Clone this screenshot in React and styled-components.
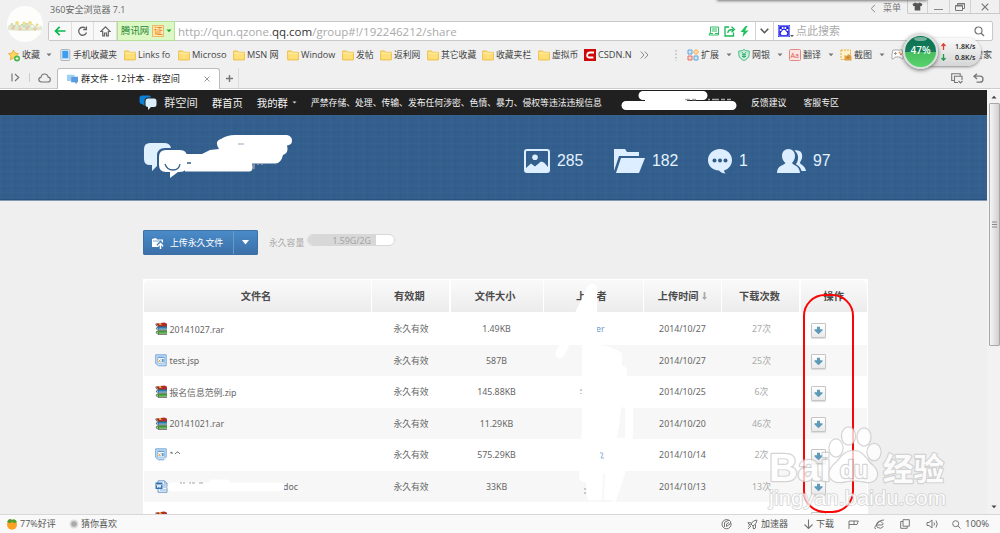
import React from 'react'
import styled, { createGlobalStyle } from 'styled-components'

const GlobalStyle = createGlobalStyle`
*{
    box-sizing: border-box;
}
body{
    margin: 0;
    overflow: hidden;
    font-family: "Open Sans", "Noto Sans CJK SC", sans-serif;
    font-size: 9px;
    color: #444;
}
svg{
    display: block;
    flex: none;
}
`

const bookmarks = [
    { label: '手机收藏夹', width: 64, icon: 'phone' },
    { label: 'Links fo', width: 54, size: 9 },
    { label: 'Microso', width: 55, size: 9.3 },
    { label: 'MSN 网', width: 54, size: 9.2 },
    { label: 'Window', width: 55, size: 9.1 },
    { label: '发帖', width: 38 },
    { label: '返利网', width: 47 },
    { label: '其它收藏', width: 55 },
    { label: '收藏夹栏', width: 56 },
    { label: '虚拟币', width: 46 },
    { label: 'CSDN.N', width: 56, icon: 'csdn', size: 9.2 },
]

const tools = [
    { label: '扩展', icon: 'grid', width: 51 },
    { label: '网银', icon: 'shield', width: 51 },
    { label: '翻译', icon: 'translate', width: 51 },
    { label: '截图', icon: 'crop', width: 51 },
]

const files = [
    { name: '20141027.rar', icon: 'rar', size: '1.49KB', user: 'er', userLeft: 53, date: '2014/10/27', count: '27次' },
    { name: 'test.jsp', icon: 'jsp', size: '587B', date: '2014/10/27', count: '25次' },
    { name: '报名信息范例.zip', icon: 'rar', size: '145.88KB', date: '2014/10/25', count: '6次' },
    { name: '20141021.rar', icon: 'rar', size: '11.29KB', date: '2014/10/20', count: '46次' },
    { name: '', icon: 'jsp', size: '575.29KB', date: '2014/10/14', count: '2次' },
    { name: 'doc', nameLeft: 115, icon: 'doc', size: '33KB', date: '2014/10/13', count: '13次' },
    { name: '', icon: 'rar', size: '', date: '', count: '' },
]

function Icon({ name }) {
    switch (name) {
        case 'phone':
            return <svg width="11" height="12" viewBox="0 0 11 12"><rect x=".8" y=".5" width="9" height="11" rx="1" fill="#e8edf2" stroke="#a9b5c2" /><path d="M2.300 1.800h6v7.500h-6z" fill="#3d9df3" /></svg>
        case 'csdn':
            return <svg width="12" height="12" viewBox="0 0 12 12"><path d="M0 0h12v12H0z" fill="#cf0808" /><path d="M10 3.500H6Q3.600 3.500 3.200 5.800q-.4 2.700 1.800 2.700h4.400" fill="none" stroke="#fff" strokeWidth="1.800" /></svg>
        case 'grid':
            return <svg width="12" height="12" viewBox="0 0 12 12"><path d="M1 1h4v4H1z" stroke="#65a7da" fill="#cfe6f8" /><path d="M9 .500l2.500 2.500L9 5.500 6.500 3z" stroke="#f2a045" fill="#ffe1a8" /><path d="M1 7h4v4H1z" stroke="#e07367" fill="#f8d5d1" /><path d="M7 7h4v4H7z" stroke="#65a7da" fill="#cfe6f8" /></svg>
        case 'shield':
            return <svg width="12" height="12" viewBox="0 0 12 12" fill="none"><path d="M6 .6C4 2 2 2 .8 2v3.600C.8 9 4 10.500 6 11.500c2-1 5.200-2.500 5.200-5.900V2C10 2 8 2 6 .6z" fill="#c9f0db" stroke="#43b983" /><path d="M3.800 3l2.200 2.500L8.200 3M6 5.500V9M4 5.800h4M4 7.500h4" stroke="#35a774" /></svg>
        case 'translate':
            return <svg width="12" height="12" viewBox="0 0 12 12"><rect x=".5" y=".5" width="11" height="11" rx="1" fill="#fbe4e2" stroke="#df8b85" /><text x="1.600" y="8.800" fontSize="7" fill="#d7564d">Aa</text></svg>
        case 'crop':
            return <svg width="12" height="12" viewBox="0 0 12 12"><rect x="1" y="1" width="9.500" height="9.500" fill="#fff2ca" stroke="#eba936" strokeDasharray="2 1" /><path d="M4.500 6l2 1 2-2 3 2v4.500h-7z" fill="#e0a04a" /><circle cx="8" cy="8.500" r="1.300" fill="#c98432" /></svg>
        case 'game':
            return <svg width="13" height="12" viewBox="0 0 13 12" fill="none"><path d="M2 1h9q1.500 4 1 9-1 1-3-2H4Q2 11 1 10 .5 5 2 1z" stroke="#aaa" fill="#fff" /><path d="M3 4.500h3M4.500 3v3" stroke="#999" /><circle cx="8.500" cy="3.500" r="1" fill="#eda33b" /><circle cx="10" cy="5.200" r="1" fill="#e35d52" /></svg>
        case 'rar':
            return <svg width="13" height="13" viewBox="0 0 13 13"><path d="M1 1.500L9.500.500l2.500 1.300v2.500H3z" fill="#b02c2c" /><path d="M2 5h10v2.800H3z" fill="#2c78b8" /><path d="M2 8.800h10v3.200H3z" fill="#3f9c2c" /><path d="M3 4.500h9M3 8.200h9M3 12.300h9" stroke="#222" strokeWidth=".7" /><path d="M4 7h8M4 11.200h8" stroke="#bfe6c4" strokeWidth=".7" /><path d="M3.500 1.300l2-.4 1.300 1.600-2 .4z" fill="#f0c438" /><path d="M1 1.600Q.2 3.500 2.800 4.500M2 5.300Q.2 6.800 2.800 8.200M2 9Q.2 10.800 2.800 12.300" stroke="#444" strokeWidth=".9" fill="none" /></svg>
        case 'doc':
            return <svg width="13" height="13" viewBox="0 0 13 13"><path d="M3 .800h6.500L12 3.300v9H3z" fill="#eef6ff" stroke="#6e9bc8" /><path d="M9.500.800v2.500H12M8 5h3M8 7h3M5 10h6" stroke="#8aaed2" fill="none" /><path d="M.5 2.500h7v6.500h-7z" fill="#3472b0" /><path d="M1.800 4l1 3.500L4 4.500l1 3L6.200 4" stroke="#fff" fill="none" /></svg>
        case 'jsp':
            return <svg width="13" height="13" viewBox="0 0 13 13"><path d="M.7.800h10.500v11H3.500L.7 9.500z" fill="#c7dff5" stroke="#79a7d4" /><path d="M2.500 3h7v6h-7z" fill="#fff" stroke="#8bb8e0" strokeWidth=".8" /><path d="M3 3.500h6" stroke="#6aa4d8" strokeWidth="1.300" /><path d="M3.500 5.500l2 2.500m0-2.500l-2 2.500" stroke="#e59b40" /><path d="M6.700 5h2v3h-2z" fill="#559dd9" /></svg>
        default:
            return <svg width="12" height="11" viewBox="0 0 12 11"><path d="M.7 1h3.800l1.200 1.300h5.600v7.600H.7z" fill="#ffdf78" stroke="#edbd45" /><path d="M1 3.200h10" stroke="#fff0ae" /></svg>
    }
}

function Caret({ color = '#777' }) {
    return <svg width="6" height="4" viewBox="0 0 6 4"><path d="M.5.500h5L3 3.300z" fill={color} /></svg>
}

function TopBar() {
    return (
        <TitleArea>
            <Avatar>
                <svg width="36" height="36" viewBox="0 0 36 36">
                    <path d="M1 20q4-3 7-1t7-1 7 1 13 1v4Q18 26 1 24z" fill="#dfe9cb" />
                    <path d="M3 20l2-3 2 4 3-4 2 4 3-3 2 3 3-4 2 4 3-3 3 3 3-2" stroke="#bccda5" strokeWidth=".8" fill="none" />
                    <g fill="#efc0ae"><circle cx="6" cy="22" r="1.700" /><circle cx="13" cy="23" r="1.500" /><circle cx="20" cy="22" r="1.700" /><circle cx="28" cy="23" r="1.600" /></g>
                    <g fill="#efdf80"><circle cx="10" cy="17" r="1.900" /><circle cx="17" cy="17" r="1.600" /><circle cx="23" cy="17" r="1.900" /><circle cx="30" cy="19" r="1.400" /></g>
                </svg>
            </Avatar>
            <TitleRight>
                <TitleRow>
                    <AppTitle>360安全浏览器 7.1</AppTitle>
                    <MenuLabel>
                        <svg width="6" height="9" viewBox="0 0 6 9"><path d="M5 .800L1.200 4.500 5 8.200" fill="none" stroke="#888" /></svg>
                        <span>菜单</span>
                    </MenuLabel>
                    <WindowButtons>
                        <WinButton $width={20}><svg width="11" height="9" viewBox="0 0 11 9"><path d="M3.500.500Q5.500 2.200 7.500.500L10.500 2 9.500 4.300l-1.200-.4V8.500H2.700V3.900l-1.200.4L.5 2z" fill="#555" /></svg></WinButton>
                        <WinButton $width={22}><svg width="9" height="8" viewBox="0 0 9 8"><path d="M0 6.500h9" stroke="#888" /></svg></WinButton>
                        <WinButton $width={21}><svg width="10" height="8" viewBox="0 0 10 8"><path d="M2.500 2V.500h7v5H8M.5 2.500h7v5h-7z" stroke="#777" fill="none" /><path d="M2.500 1h7M.5 3h7" stroke="#777" /></svg></WinButton>
                        <WinButton $width={29}><svg width="8" height="8" viewBox="0 0 8 8"><path d="M.7.700l6.600 6.600M7.300.700L.7 7.300" stroke="#777" strokeWidth="1.200" /></svg></WinButton>
                    </WindowButtons>
                </TitleRow>
                <AddressBar>
                    <NavButton $width={23}><svg width="12" height="10" viewBox="0 0 12 10"><path d="M11.500 5H1.500M5.700.800L1.500 5l4.200 4.200" stroke="#0bb850" strokeWidth="1.700" fill="none" /></svg></NavButton>
                    <NavButton $width={22}><svg width="11" height="11" viewBox="0 0 11 11"><path d="M8.500 2.400A4 4 0 1 0 9.500 6.500M9.400.500v3.200H6.200" stroke="#666" strokeWidth="1.300" fill="none" /></svg></NavButton>
                    <NavButton $width={23}><svg width="11" height="11" viewBox="0 0 11 11"><path d="M.8 5.500L5.500.9l4.700 4.600H8.300v4.300H6.500V7h-2v2.800H2.700V5.500z" stroke="#666" strokeWidth="1.200" fill="none" /></svg></NavButton>
                    <SiteBadge>
                        <span>腾讯网</span>
                        <Cert>证</Cert>
                        <Caret color="#24a32b" />
                    </SiteBadge>
                    <Url>http://qun.qzone.<b>qq.com</b>/group#!/192246212/share</Url>
                    <AddressIcons>
                        <svg width="12" height="11" viewBox="0 0 12 11"><path d="M2.500 1h8v8H1L2.500 6zM4 3h5M4 5h5M2 7.500h3M7 7.500h3" stroke="#2abf61" fill="none" /></svg>
                        <svg width="12" height="11" viewBox="0 0 12 11"><path d="M5 1H1v9h8.500V6.500M3.800 7Q4 3.500 9 3.500M7.500.700l3 2.800-3 2.700" stroke="#17b955" strokeWidth="1.300" fill="none" /></svg>
                        <svg width="9" height="11" viewBox="0 0 9 11"><path d="M5.500 0L.5 6h3L2.500 11l6-6.500H5L7.500 0z" fill="#1cc45b" /></svg>
                    </AddressIcons>
                    <DropButton><svg width="9" height="6" viewBox="0 0 9 6"><path d="M.7.700l3.800 4 3.800-4" stroke="#555" strokeWidth="1.500" fill="none" /></svg></DropButton>
                    <SearchBox>
                        <svg width="12" height="12" viewBox="0 0 12 12"><path d="M0 0h12v12H0z" fill="#1818e8" /><path d="M.8.800h10.400v10.400H.8z" fill="none" stroke="#fff" strokeWidth=".6" /><g fill="#fff"><circle cx="2.700" cy="5" r="1" /><circle cx="4.700" cy="3" r="1.100" /><circle cx="7.300" cy="3" r="1.100" /><circle cx="9.300" cy="5" r="1" /><path d="M6 4.700c1.500 0 1.500 1.300 2.700 2.400 1.300 1.400.5 3-1 2.900H4.300c-1.400.1-2.300-1.500-1-2.900C4.500 6 4.500 4.700 6 4.700z" /></g></svg>
                        <SearchCaret width="4" height="4" viewBox="0 0 4 4"><path d="M0 1h4L2 3z" fill="#555" /></SearchCaret>
                        <Placeholder>点此搜索</Placeholder>
                        <svg width="11" height="11" viewBox="0 0 11 11"><circle cx="4.500" cy="4.500" r="3.500" stroke="#777" strokeWidth="1.200" fill="none" /><path d="M7 7l3 3" stroke="#777" strokeWidth="1.400" /></svg>
                    </SearchBox>
                </AddressBar>
            </TitleRight>
        </TitleArea>
    )
}

function Bookmarks() {
    return (
        <BookmarkBar>
            <Favorites>
                <svg width="13" height="13" viewBox="0 0 13 13"><path d="M5.500 1l1.500 3.200 3.600.4L8 7.200l.6 3.600-3.100-1.700-3.200 1.700.6-3.600L.5 4.600 4 4.200z" fill="#ffd75c" stroke="#e9a52e" strokeWidth=".8" /><circle cx="9" cy="9.500" r="3" fill="#48b84a" /><path d="M7.500 9.500h3M9 8v3" stroke="#fff" /></svg>
                <span>收藏</span>
                <Caret />
            </Favorites>
            {bookmarks.map((item) => (
                <Bookmark key={item.label} $width={item.width} $size={item.size}>
                    <Icon name={item.icon} />
                    <span>{item.label}</span>
                </Bookmark>
            ))}
            <svg width="9" height="8" viewBox="0 0 9 8"><path d="M.7.500l3.300 3.500L.7 7.500M4.700.500L8 4 4.700 7.500" stroke="#888" fill="none" /></svg>
            <ToolList>
                <svg width="2" height="11" viewBox="0 0 2 11"><path d="M1 0v11" stroke="#bbb" strokeWidth="1.500" strokeDasharray="1.500 2" /></svg>
                {tools.map((tool) => (
                    <Tool key={tool.label} $width={tool.width}>
                        <Icon name={tool.icon} />
                        <span>{tool.label}</span>
                        <Caret />
                    </Tool>
                ))}
                <Icon name="game" />
                <LastTool>管家</LastTool>
            </ToolList>
        </BookmarkBar>
    )
}

function Bubbles() {
    return <svg width="18" height="16" viewBox="0 0 18 16"><path d="M3 .500h7q2 0 2 2H9Q5.500 2.500 5.500 6v5L3 9Q.5 9 .5 6.500V3Q.5.500 3 .500z" fill="#0c80d4" /><path d="M8.500 3.500h6.500q2.500 0 2.500 2.500v3.500q0 2.500-2.500 2.500h-3l-3 3v-3Q6.500 12 6.500 9.500V6Q6.500 3.500 8.500 3.500z" fill="#d9edfa" /></svg>
}

function TabStrip() {
    return (
        <Tabs>
            <TabTools>
                <svg width="9" height="9" viewBox="0 0 9 9"><path d="M1 .500v8M4 1l3.700 3.500L4 8" stroke="#777" strokeWidth="1.200" fill="none" /></svg>
                <Divider />
                <svg width="13" height="10" viewBox="0 0 13 10"><path d="M3.500 9Q.8 9 .8 6.600.8 4.500 3 4.300 3.400 1 6.500 1t3.600 3.200q2.200.2 2.200 2.300Q12.300 9 10 9z" stroke="#777" strokeWidth="1.200" fill="none" /></svg>
            </TabTools>
            <Tab>
                <svg width="13" height="11" viewBox="0 0 18 16"><path d="M1 1h11v3H7v6H1z" fill="#9fd0f1" /><path d="M7 4h10v8h-2v3l-3-3H7z" fill="#5b9cdf" /></svg>
                <TabTitle>群文件 - 12计本 - 群空间</TabTitle>
                <svg width="6" height="6" viewBox="0 0 6 6"><path d="M.5.500l5 5m0-5l-5 5" stroke="#999" /></svg>
            </Tab>
            <NewTab><svg width="9" height="9" viewBox="0 0 9 9"><path d="M1 4.500h7M4.500 1v7" stroke="#777" strokeWidth="1.400" /></svg></NewTab>
            <TabRight>
                <svg width="12" height="11" viewBox="0 0 12 11"><path d="M3 7.500H.7V.700h8.500V3M11 7V3.300H3.500v6.200H7M7.500 8l2 2 2-2" stroke="#777" strokeWidth="1.100" fill="none" /></svg>
                <svg width="11" height="11" viewBox="0 0 11 11"><path d="M4 .700L1 3.200 4 6M1 3.200h6q3 0 3 3t-3 3H3.500" stroke="#777" strokeWidth="1.300" fill="none" /></svg>
            </TabRight>
        </Tabs>
    )
}

function SpeedBall() {
    return (
        <SpeedWidget>
            <Ball>47%</Ball>
            <Speeds>
                <Speed>
                    <svg width="5" height="7" viewBox="0 0 5 7"><path d="M2.500 7V2M.5 3l2-2.200L4.500 3" stroke="#df3f32" strokeWidth="1.300" fill="none" /></svg>
                    <span>1.8K/s</span>
                </Speed>
                <Speed>
                    <svg width="5" height="7" viewBox="0 0 5 7"><path d="M2.500 0v5M.5 4l2 2.200L4.500 4" stroke="#239847" strokeWidth="1.300" fill="none" /></svg>
                    <span>0.8K/s</span>
                </Speed>
            </Speeds>
        </SpeedWidget>
    )
}

function SiteHeader() {
    return (
        <>
            <SiteNav>
                <Bubbles />
                <NavLink $left={7} $size={11.300} $color="#e4e4e4">群空间</NavLink>
                <NavLink $left={14} $size={10.300}>群首页</NavLink>
                <NavLink $left={14} $size={10.400}>我的群</NavLink>
                <NavCaret><svg width="5" height="3" viewBox="0 0 5 3"><path d="M.5.500h4l-2 2z" fill="#ddd" /></svg></NavCaret>
                <NavLink $left={14} $size={8.820}>严禁存储、处理、传输、发布任何涉密、色情、暴力、侵权等违法违规信息</NavLink>
                <NavRight>
                    <NavLink $size={8.900}>反馈建议</NavLink>
                    <NavLink $size={8.900}>客服专区</NavLink>
                </NavRight>
                <Scribble $left={621} $top={0} width="116" height="21" viewBox="0 0 116 21">
                    <path d="M22 5.500h60M5 15.500h106" stroke="#fff" strokeWidth="9" strokeLinecap="round" />
                    <path d="M24 10.500h42" stroke="#fff" strokeWidth="3" />
                    <path d="M64 9.500h5m2 0h4m12 0h2m2 0h7m2 0h4m2 0h4" stroke="#aaa" strokeWidth="1.500" />
                </Scribble>
            </SiteNav>
            <Banner>
                <BannerLogo>
                    <svg width="152" height="46" viewBox="0 0 152 46">
                        <path d="M8 8h14q6 0 7 5h-6q-8 0-8 8v10l-5 5v-6H8q-6 0-6-6V14q0-6 6-6z" fill="#dff0ff" />
                        <path d="M24 15h14q7 0 7 7v8q0 7-7 7h-2l-8 6v-6h-4q-7 0-7-7v-8q0-7 7-7z" fill="#fff" />
                        <path d="M43 19h17l8-4 9-1q-5-8 2-10 6-4 14-4h52q5 1 5 5.500t-5 5q2 8-4 9.500-2 8-7 8.500h-24q2 8-3 8H43z" fill="#fff" />
                        <path d="M23 29q2 6 8 6t7-6M45 28h4" stroke="#355f89" strokeWidth="1.300" fill="none" />
                        <path d="M96 9h6" stroke="#849eba" strokeWidth=".9" />
                        <path d="M112 29v5M115 29h2M119 29h2" stroke="#c9b4c6" strokeWidth="1" />
                    </svg>
                </BannerLogo>
                <Stats>
                    <Stat $width={90}>
                        <svg width="26" height="24" viewBox="0 0 26 24"><rect x="1" y="1" width="24" height="22" rx="2" fill="none" stroke="#dceeff" strokeWidth="2" /><circle cx="11" cy="8.200" r="2.800" fill="#dceeff" /><path d="M2 19l5-4.500 4 3 6-5 3 1 4 4.500v5H2z" fill="#dceeff" /></svg>
                        <span>285</span>
                    </Stat>
                    <Stat $width={94}>
                        <svg width="31" height="24" viewBox="0 0 31 24"><path d="M0 22V0h11l2 3h12v4H5z" fill="#dceeff" /><path d="M7 9h24l-6 15H2z" fill="#dceeff" /></svg>
                        <span>182</span>
                    </Stat>
                    <Stat $width={69}>
                        <svg width="24" height="25" viewBox="0 0 24 25"><path d="M12 0c7 0 12 5 12 11 0 5-3 9-8 10.500 0 1 .5 2 1.500 3-2.500 0-5-1-6.500-3C4 21 0 17 0 11 0 5 5 0 12 0z" fill="#dceeff" /><g fill="#315c88"><circle cx="6.500" cy="11.500" r="2" /><circle cx="12" cy="11.500" r="2" /><circle cx="17.500" cy="11.500" r="2" /></g></svg>
                        <span>1</span>
                    </Stat>
                    <Stat $width={60}>
                        <svg width="29" height="24" viewBox="0 0 29 24"><path d="M17.500 1.500c6-1 8.500 3 7.500 7.500-.6 2.500-2 3.500-2 5 0 1.500 5.500 2.500 6 8h-4.500c-1-5-5.500-6-5.500-7 3-4 3-10-1.500-13.500z" fill="#dceeff" /><path d="M11.500 0c4 0 6.500 3 6.500 7 0 3-1.500 5.500-3 7 1 2.500 7.500 2 8 10H0c0-8 7-7.500 8.500-10-2-1.500-3.500-4-3.500-7 0-4 2.500-7 6.500-7z" fill="#dceeff" /></svg>
                        <span>97</span>
                    </Stat>
                </Stats>
            </Banner>
        </>
    )
}

function FileRow({ file, even }) {
    return (
        <Row $even={even}>
            <NameCell>
                <Icon name={file.icon} />
                <FileName $left={file.nameLeft}>{file.name}</FileName>
            </NameCell>
            <Cell>{file.date && '永久有效'}</Cell>
            <Cell>{file.size}</Cell>
            <UserCell $left={file.userLeft}>{file.user}</UserCell>
            <Cell>{file.date}</Cell>
            <Cell $light>{file.count}</Cell>
            <ActionCell>
                <DownloadButton>
                    <svg width="9" height="9" viewBox="0 0 9 9"><path d="M3 .700h3v2.600h2.500v1.200L4.500 8.300.5 4.500V3.300H3z" fill="#5f9abb" /></svg>
                </DownloadButton>
            </ActionCell>
        </Row>
    )
}

function FileTable() {
    return (
        <Table>
            <HeadRow>
                <Head>文件名</Head>
                <Head $shift={-3}>有效期</Head>
                <Head $shift={-3}>文件大小</Head>
                <Head $shift={-4}>上传者</Head>
                <Head>上传时间<svg width="7" height="9" viewBox="0 0 7 9"><path d="M2.600 0h1.800v5H6L3.500 8 1 5h1.600z" fill="#aaa" /></svg></Head>
                <Head $shift={-3}>下载次数</Head>
                <Head>操作</Head>
            </HeadRow>
            {files.map((file, i) => <FileRow key={i} file={file} even={i % 2 === 1} />)}
            <Scribble $left={409} $top={3} width="84" height="228" viewBox="0 0 84 228">
                <path d="M36 5q4-7 9 0v58l10 1 10 4q5 2 5 5v11q4 0 5 4v37h6v31l-8 36-9 27q-4 2-5-1H40q-4 2-5-4l-1-14q-6 1-7-5l3-48V52z" fill="#fff" />
                <path d="M8 72L40 6" stroke="#fff" strokeWidth="9" strokeLinecap="round" />
                <path d="M69 125.500h4V156h-8q3-14 4-30.500M51 191h2l-1 27h-2z" fill="#f7f7f7" />
            </Scribble>
            <Scribble $left={24} $top={199} width="118" height="16" viewBox="0 0 118 16">
                <path d="M5 9h108M46 6h13" stroke="#fff" strokeWidth="9" strokeLinecap="round" />
                <path d="M13 5h2m1 0h2m4 0h2m1 0h3m4 0h4" stroke="#999" strokeWidth=".9" />
            </Scribble>
            <Scribble $left={11} $top={170} width="32" height="18" viewBox="0 0 32 18">
                <path d="M16 4l2-1v2M21 5l2-2h1l2 2" stroke="#777" fill="none" />
                <path d="M0 10l6 6v2H0zM8 13l5-5v9H8z" fill="#fff" />
            </Scribble>
            <Scribble $left={433} $top={106} width="30" height="110" viewBox="0 0 30 110">
                <path d="M5 4v2m0 2v1m4 94v2m0 2v2" stroke="#999" />
                <path d="M24 68q3-1 3 1l-2 4h3" stroke="#8fb4da" fill="none" />
            </Scribble>
        </Table>
    )
}

function Watermark() {
    return (
        <WatermarkSvg width="190" height="90" viewBox="0 0 190 90">
            <g fill="#fff" stroke="#c9c9c9" strokeWidth="2.400" strokeLinejoin="round" paintOrder="stroke" fontWeight="bold">
                <text x="4" y="56" fontSize="39" textLength="62" lengthAdjust="spacingAndGlyphs">Bai</text>
                <ellipse cx="71" cy="23" rx="6.500" ry="8.500" />
                <ellipse cx="83.500" cy="11" rx="6.500" ry="8.500" />
                <ellipse cx="99" cy="12" rx="6.500" ry="8.500" />
                <ellipse cx="109" cy="27" rx="6.500" ry="8" />
                <path d="M89 26c10 0 12 10 19 15 8 8 3 17-6 16-8-2-18-2-25 0-12 1-16-8-9-16 8-7 10-15 21-15z" />
                <text x="75" y="53" fontSize="23" textLength="28" lengthAdjust="spacingAndGlyphs">du</text>
                <text x="118" y="55" fontSize="31" textLength="61" lengthAdjust="spacingAndGlyphs">经验</text>
                <text x="4" y="80" fontSize="20" fontWeight="normal" strokeWidth="1.600" textLength="177" lengthAdjust="spacingAndGlyphs">jingyan.baidu.com</text>
            </g>
        </WatermarkSvg>
    )
}

function StatusBar() {
    return (
        <Status>
            <StatusItem $width={63}>
                <svg width="12" height="12" viewBox="0 0 12 12"><circle cx="6" cy="6.800" r="5" fill="#ffa224" /><path d="M1 4q4 2 5-.5Q8 6 11 4 9 0 6 2 3-.5 1 4z" fill="#4d9c2d" /></svg>
                <span>77%好评</span>
            </StatusItem>
            <StatusItem $width={60}>
                <svg width="10" height="10" viewBox="0 0 10 10"><circle cx="5" cy="5" r="4.500" fill="#ddd" /><circle cx="5" cy="5" r="2.800" fill="#aaa" /></svg>
                <span>猜你喜欢</span>
            </StatusItem>
            <StatusRight>
                <StatusItem $width={26}><svg width="11" height="11" viewBox="0 0 11 11"><path d="M8 1.300A4.600 4.600 0 1 0 10 4M3.500 8V3.500L8 1q3 1.500 1 4L5.500 7.500V5L8 3.500" stroke="#777" fill="none" /></svg></StatusItem>
                <StatusItem $width={56} $gap={3}>
                    <svg width="11" height="11" viewBox="0 0 11 11"><path d="M10 1Q6 1 4 5l2 2q4-2 4-6zM4.500 4L1 3.500l1 2 2 .500M6 7l.5 3 2-1V5.500M1 10l3-3M1 7.500l1.500-1" stroke="#777" fill="none" /></svg>
                    <span>加速器</span>
                </StatusItem>
                <StatusItem $width={45}>
                    <svg width="11" height="11" viewBox="0 0 11 11"><path d="M5.500.500v9M1.500 5.500l4 4 4-4" stroke="#777" strokeWidth="1.100" fill="none" /></svg>
                    <span>下载</span>
                </StatusItem>
                <StatusItem $width={26}><svg width="11" height="11" viewBox="0 0 11 11"><path d="M1 10V2h5v3.500H1M6 2h4.300L9 5.500H6" stroke="#777" fill="none" /></svg></StatusItem>
                <StatusItem $width={26}><svg width="11" height="11" viewBox="0 0 11 11"><path d="M9.500 7.500Q7 10.500 3.500 8.500 1 6 3.500 3.200T9 4.700L8.500 6H3M2 9.500Q-1 10 3 5T10 1" stroke="#777" fill="none" /></svg></StatusItem>
                <StatusItem $width={26}><svg width="10" height="10" viewBox="0 0 10 10"><path d="M3 .700h6.300v6.500H3zM3 2.500H.7v6.800h6.500v-2" stroke="#777" fill="none" /></svg></StatusItem>
                <StatusItem $width={26}><svg width="12" height="10" viewBox="0 0 12 10"><path d="M1 3.500h2L6 1v8L3 6.500H1zM8 3.500q1 1.500 0 3M10 1.500q2.500 3.500 0 7" stroke="#777" fill="none" /></svg></StatusItem>
                <StatusItem $width={48}>
                    <svg width="9" height="9" viewBox="0 0 9 9"><circle cx="3.700" cy="3.700" r="3" stroke="#777" fill="none" /><path d="M6 6l2.500 2.500" stroke="#777" /></svg>
                    <Percent>100%</Percent>
                </StatusItem>
            </StatusRight>
        </Status>
    )
}

export default function App() {
    return (
        <Browser>
            <GlobalStyle />
            <TopShadow />
            <TopBar />
            <Bookmarks />
            <TabStrip />
            <Viewport>
                <Page>
                    <SiteHeader />
                    <Content>
                        <Toolbar>
                            <UploadButton>
                                <UploadMain>
                                    <svg width="13" height="13" viewBox="0 0 13 13"><path d="M1 3l4-1 1 1.500h6V11H1z" fill="#fff" /><path d="M2 5h9" stroke="#548ac0" strokeWidth=".8" /><path d="M9.500 13V7M6.500 9.700l3-3 3 3" stroke="#477fb7" strokeWidth="3" fill="none" /><path d="M9.500 13V7.500M7 10l2.500-2.500L12 10" stroke="#fff" strokeWidth="1.400" fill="none" /></svg>
                                    <span>上传永久文件</span>
                                </UploadMain>
                                <UploadMore><svg width="7" height="5" viewBox="0 0 7 5"><path d="M0 0h7L3.500 4.500z" fill="#fff" /></svg></UploadMore>
                            </UploadButton>
                            <Capacity>永久容量</Capacity>
                            <Meter><MeterFill>1.59G/2G</MeterFill></Meter>
                        </Toolbar>
                        <FileTable />
                    </Content>
                </Page>
                <Scrollbar>
                    <svg width="6" height="4" viewBox="0 0 6 4"><path d="M.5 3.500h5L3 .700z" fill="#444" /></svg>
                    <Thumb><svg width="5" height="7" viewBox="0 0 5 7"><path d="M0 1h5M0 3.500h5M0 6h5" stroke="#888" /></svg></Thumb>
                    <Caret color="#444" />
                </Scrollbar>
                <Highlight />
                <Watermark />
            </Viewport>
            <StatusBar />
            <SpeedBall />
        </Browser>
    )
}

const Browser = styled.div`
position: relative;
display: flex;
flex-direction: column;
width: 1000px;
height: 533px;
background: #f0f0f0;
overflow: hidden;
line-height: 14px;
white-space: nowrap;
`
const TopShadow = styled.div`
position: absolute;
left: 718px;
top: -4px;
width: 208px;
height: 4px;
box-shadow: 0 0 3px 1px #777;
`
const TitleArea = styled.div`
display: flex;
height: 43px;
padding-left: 7px;
`
const Avatar = styled.div`
width: 36px;
height: 36px;
margin: 6px 5px 0 0;
border-radius: 50%;
background: #fdfdfb;
overflow: hidden;
`
const TitleRight = styled.div`
flex: 1;
`
const TitleRow = styled.div`
display: flex;
height: 21px;
`
const AppTitle = styled.div`
flex: 1;
padding: 3px 0 0 2px;
font-size: 9px;
color: #666;
`
const MenuLabel = styled.div`
display: flex;
align-items: center;
gap: 7px;
height: 16px;
margin-right: 6px;
color: #777;
`
const WindowButtons = styled.div`
display: flex;
height: 14px;
width: 93px;
border: 1px solid #c9c9c9;
border-width: 0 0 1px 1px;
border-radius: 0 0 0 2px;
`
const WinButton = styled.div`
display: flex;
align-items: center;
justify-content: center;
width: ${({ $width }) => $width}px;
border-right: 1px solid #d2d2d2;
`
const AddressBar = styled.div`
display: flex;
width: 945px;
height: 20px;
border: 1px solid #c8c8c8;
border-radius: 2px;
background: white;
`
const NavButton = styled.div`
display: flex;
align-items: center;
justify-content: center;
width: ${({ $width }) => $width}px;
background: #f8f8f8;
border-right: 1px solid #dedede;
`
const SiteBadge = styled.div`
display: flex;
align-items: center;
gap: 2px;
width: 58px;
padding-left: 3px;
font-size: 9.4px;
color: #278735;
background: #dcf8c4;
border: 1px solid #b5df99;
margin: -1px 0;
`
const Cert = styled.span`
width: 12px;
height: 12px;
margin-left: 1px;
border: 1px solid #f1b866;
background: #ffe6ad;
font-size: 9px;
line-height: 10px;
color: #df8120;
text-align: center;
overflow: hidden;
`
const Url = styled.div`
flex: 1;
padding-left: 3px;
font-size: 11.520px;
line-height: 19px;
color: #aaa;
b{
    color: #333;
    font-weight: normal;
}
`
const AddressIcons = styled.div`
display: flex;
align-items: center;
gap: 4px;
width: 47px;
`
const DropButton = styled.div`
display: flex;
align-items: center;
justify-content: center;
width: 19px;
border: 1px solid #d5d5d5;
border-width: 0 1px;
`
const SearchBox = styled.div`
display: flex;
align-items: center;
width: 218px;
padding: 0 7px 0 4px;
`
const SearchCaret = styled.svg`
margin-top: 9px;
`
const Placeholder = styled.span`
flex: 1;
padding-left: 2px;
font-size: 11px;
color: #aaa;
`
const BookmarkBar = styled.div`
display: flex;
align-items: center;
height: 24px;
padding-left: 8px;
`
const Favorites = styled.div`
display: flex;
align-items: center;
width: 52px;
gap: 1px;
span{
    width: 23px;
}
`
const Bookmark = styled.div`
display: flex;
align-items: center;
gap: 2px;
flex: none;
width: ${({ $width }) => $width}px;
font-size: ${({ $size }) => $size || 8.8}px;
`
const ToolList = styled.div`
display: flex;
align-items: center;
margin-left: 26px;
`
const Tool = styled.div`
display: flex;
align-items: center;
gap: 2px;
width: ${({ $width }) => $width}px;
&:nth-child(2){
    margin-left: 10px;
}
span{
    width: 23px;
}
`
const LastTool = styled.span`
margin-left: 70px;
`
const Tabs = styled.div`
display: flex;
align-items: flex-end;
height: 22px;
border-bottom: 1px solid #ccc;
`
const TabTools = styled.div`
display: flex;
align-items: center;
gap: 8px;
width: 57px;
height: 21px;
padding-left: 11px;
`
const Divider = styled.div`
width: 1px;
height: 9px;
background: #ccc;
margin-left: 1px;
`
const Tab = styled.div`
display: flex;
align-items: center;
width: 163px;
height: 21px;
margin-bottom: -1px;
padding: 0 9px 0 8px;
border: 1px solid #bdbdbd;
border-bottom: 0;
border-radius: 3px 3px 0 0;
background: white;
`
const TabTitle = styled.span`
flex: 1;
padding-left: 2px;
font-size: 9.150px;
color: #222;
`
const NewTab = styled.div`
display: flex;
align-items: center;
justify-content: center;
width: 19px;
height: 20px;
border-right: 1px solid #ddd;
`
const TabRight = styled.div`
display: flex;
align-items: center;
gap: 10px;
height: 20px;
margin-left: auto;
padding-right: 16px;
`
const SpeedWidget = styled.div`
position: absolute;
left: 903px;
top: 34px;
display: flex;
align-items: center;
width: 78px;
height: 35px;
&::before{
    content: "";
    position: absolute;
    inset: 4px 0 3px 16px;
    border-radius: 14px;
    background: linear-gradient(#fafafa, #d6d6d6);
    box-shadow: 0 1px 3px #888;
}
`
const Ball = styled.div`
position: relative;
width: 35px;
height: 35px;
border: 2px solid #d8e0db;
border-radius: 50%;
background: linear-gradient(#087451 0, #16795b 50%, #49bd5f 51%, #58d36c 100%);
box-shadow: 0 1px 4px #666;
color: #f1fff5;
font-size: 10px;
line-height: 29px;
font-weight: 600;
text-align: center;
&::after{
    content: "";
    position: absolute;
    left: 9px;
    top: 1px;
    width: 13px;
    height: 4px;
    border-radius: 50%;
    background: #ffffff70;
}
`
const Speeds = styled.div`
position: relative;
padding-left: 3px;
`
const Speed = styled.div`
display: flex;
align-items: center;
gap: 9px;
font-family: "Open Sans", sans-serif;
font-size: 7px;
font-weight: 600;
line-height: 11px;
color: #222;
`
const Viewport = styled.div`
position: relative;
display: flex;
height: 425px;
border-top: 1px solid white;
overflow: hidden;
`
const Page = styled.div`
width: 987px;
height: 424px;
background: #efefef;
overflow: hidden;
`
const SiteNav = styled.div`
position: relative;
display: flex;
align-items: center;
height: 25px;
padding-left: 139px;
background: #202020;
`
const NavLink = styled.span`
margin-left: ${({ $left }) => $left || 0}px;
font-size: ${({ $size }) => $size}px;
color: ${({ $color }) => $color || '#f5f5f5'};
`
const NavCaret = styled.span`
margin-left: 4px;
`
const NavRight = styled.div`
display: flex;
gap: 17px;
margin-left: auto;
padding-right: 148px;
`
const Scribble = styled.svg`
position: absolute;
left: ${({ $left }) => $left}px;
top: ${({ $top }) => $top}px;
`
const Banner = styled.div`
display: flex;
height: 86px;
padding-left: 142px;
background:
    repeating-linear-gradient(90deg, #ffffff05 0 1px, transparent 1px 4px, #00000007 4px 5px, transparent 5px 11px),
    repeating-linear-gradient(#ffffff04 0 1px, transparent 1px 3px, #00000007 3px 4px, transparent 4px 7px),
    #335f8e;
border-bottom: 1px solid #8299b2;
box-shadow: inset 0 -1px #28517c;
`
const BannerLogo = styled.div`
width: 382px;
padding-top: 20px;
`
const Stats = styled.div`
display: flex;
padding-top: 34px;
`
const Stat = styled.div`
display: flex;
gap: 7px;
width: ${({ $width }) => $width}px;
height: 25px;
font-family: "Liberation Sans", sans-serif;
font-size: 15.8px;
line-height: 24px;
color: #e4f2ff;
`
const Content = styled.div`
width: 725px;
margin-left: 143px;
padding-top: 29px;
`
const Toolbar = styled.div`
display: flex;
height: 49px;
`
const UploadButton = styled.div`
display: flex;
width: 115px;
height: 25px;
border: 1px solid #3c71a6;
border-radius: 1px;
background: linear-gradient(#498bc8, #3c70a9);
color: white;
`
const UploadMain = styled.div`
display: flex;
align-items: center;
gap: 6px;
width: 90px;
padding-left: 7px;
font-size: 8.900px;
border-right: 1px solid #6b9ac9;
`
const UploadMore = styled.div`
flex: 1;
display: flex;
align-items: center;
justify-content: center;
`
const Capacity = styled.span`
width: 38px;
margin-left: 11px;
padding-top: 6px;
font-size: 8.8px;
color: #aaa;
`
const Meter = styled.div`
width: 88px;
height: 12px;
margin-top: 4px;
border: 1px solid #d8d8d8;
border-radius: 6px;
background: white;
overflow: hidden;
`
const MeterFill = styled.div`
width: 68px;
height: 10px;
padding-right: 5px;
background: #d8d8d8;
font-family: "Noto Sans", sans-serif;
font-size: 8.800px;
line-height: 12px;
text-align: right;
color: #a5a5a5;
`
const Table = styled.div`
position: relative;
width: 725px;
height: 246px;
padding: 1px 1px 0 1px;
background: white;
`
const HeadRow = styled.div`
display: grid;
grid-template-columns: 227px 77px 92px 99px 77px 77px 66px;
column-gap: 1.300px;
height: 32px;
margin-bottom: 1px;
`
const Head = styled.div`
display: flex;
align-items: center;
justify-content: center;
gap: 2px;
padding-right: ${({ $shift }) => ($shift ? -$shift : 0)}px;
background: linear-gradient(#fafafa, #ececec);
font-size: 10.200px;
font-weight: bold;
color: #4a4a4a;
&:first-child{
    border-radius: 5px 0 0 0;
    padding-right: 3px;
}
&:last-child{
    border-radius: 0 5px 0 0;
}
`
const Row = styled.div`
display: grid;
grid-template-columns: 228px 78px 93px 100px 79px 79px 66px;
align-items: center;
height: 31.500px;
background: ${({ $even }) => ($even ? '#f7f7f7' : 'white')};
font-family: "Noto Sans", "Noto Sans CJK SC", sans-serif;
font-size: 8.800px;
color: #666;
`
const NameCell = styled.div`
display: flex;
align-items: center;
padding-left: 11px;
`
const FileName = styled.span`
margin-left: ${({ $left }) => $left || 1.5}px;
padding-top: 2px;
`
const Cell = styled.div`
padding-top: 1px;
text-align: center;
color: ${({ $light }) => ($light ? '#aaa' : '#666')};
`
const UserCell = styled.div`
padding: 1px 0 0 ${({ $left }) => $left || 0}px;
color: #719ac9;
`
const ActionCell = styled.div`
padding-left: 10px;
`
const DownloadButton = styled.div`
display: flex;
align-items: center;
justify-content: center;
width: 15px;
height: 15px;
margin-top: 3px;
border: 1px solid #c5c5c5;
border-radius: 1px;
background: linear-gradient(#fff, #e9e9e9);
box-shadow: 0 1px 1px #ddd;
`
const Scrollbar = styled.div`
display: flex;
flex-direction: column;
align-items: center;
justify-content: space-between;
width: 13px;
height: 424px;
padding: 5px 0 5px 1px;
background: #f2f2f2;
`
const Thumb = styled.div`
display: flex;
align-items: center;
justify-content: center;
width: 11px;
height: 243px;
margin: 4px 0 auto;
border: 1px solid #a8a8a8;
border-radius: 1px;
background: linear-gradient(90deg, #f5f5f5, #d0d0d2);
`
const Highlight = styled.div`
position: absolute;
left: 803px;
top: 204px;
width: 51px;
height: 219px;
border: 2px solid #fa0505;
border-radius: 22px;
`
const WatermarkSvg = styled.svg`
position: absolute;
left: 765px;
top: 335px;
font-family: "Liberation Sans", "Noto Sans CJK SC", sans-serif;
opacity: .76;
`
const Status = styled.div`
display: flex;
align-items: center;
height: 19px;
padding-left: 6px;
border-top: 1px solid #d8d8d8;
background: #f9f9f9;
color: #555;
`
const StatusItem = styled.div`
display: flex;
align-items: center;
gap: ${({ $gap }) => $gap || 2}px;
flex: none;
width: ${({ $width }) => $width}px;
`
const StatusRight = styled.div`
display: flex;
margin-left: auto;
`
const Percent = styled.span`
padding-left: 2px;
font-size: 9.500px;
`
